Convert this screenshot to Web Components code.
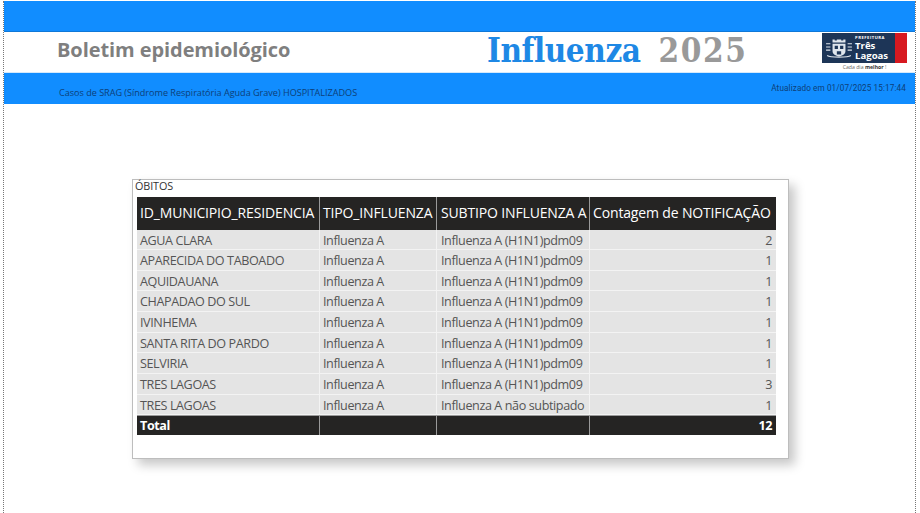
<!DOCTYPE html>
<html lang="pt-BR">
<head>
<meta charset="utf-8">
<title>Boletim epidemiológico Influenza 2025</title>
<style>
    html, body{ margin: 0; padding: 0; background: #fff; }
    body{ width: 920px; height: 513px; overflow: hidden; font-family: "Open Sans", sans-serif; }
</style>
</head>
<body>
<report-page>
    <report-header></report-header>
    <table-card title-text="ÓBITOS"></table-card>
</report-page>

<script>
class ReportPage extends HTMLElement{
    connectedCallback(){
        this.attachShadow({mode: 'open'}).innerHTML = `
            <style>
                :host{
                    display: block;
                    width: 920px;
                    height: 513px;
                    box-sizing: border-box;
                    padding: 1px 3px 0 3px;
                }
                .frame{
                    height: 100%;
                    border-left: 1px dotted #777;
                    border-right: 1px dotted #777;
                    box-sizing: border-box;
                    width: 913px;
                }
            </style>
            <div class="frame"><slot></slot></div>
        `;
    }
}

class ReportHeader extends HTMLElement{
    connectedCallback(){
        this.attachShadow({mode: 'open'}).innerHTML = `
            <style>
                :host{ display: block; }
                .top{ height: 30px; background: #118dff; border-bottom: 1px solid #0f78d8; }
                .middle{
                    height: 40px;
                    display: flex;
                    align-items: center;
                    padding-left: 53px;
                    box-sizing: border-box;
                }
                .boletim{
                    font: 700 20px "Open Sans", sans-serif;
                    letter-spacing: -0.08px;
                    color: #7f7f7f;
                    width: 430px;
                    position: relative;
                    top: -3px;
                }
                .influenza{
                    font: 700 33px "DejaVu Serif", serif;
                    font-stretch: condensed;
                    letter-spacing: -0.45px;
                    color: #1e88e5;
                    width: 335px;
                    white-space: nowrap;
                    position: relative;
                    top: -2px;
                }
                .influenza span{ color: #999; letter-spacing: 1.6px; margin-left: 8px; }
                .bottom{
                    height: 32px;
                    background: #118dff;
                    border-top: 1px solid #d5e9fb;
                    box-sizing: border-box;
                    display: flex;
                    justify-content: space-between;
                    padding: 0 9px 0 55px;
                    font-size: 9px;
                    color: #0d3f78;
                }
                .casos{ font: 9.1px "Open Sans", sans-serif; letter-spacing: -0.02px; padding-top: 13px; }
                .updated{ font: 8.2px Roboto, sans-serif; letter-spacing: 0.1px; padding-top: 10px; }
            </style>
            <div class="top"></div>
            <div class="middle">
                <div class="boletim">Boletim epidemiológico</div>
                <div class="influenza">Influenza <span>2025</span></div>
                <city-logo></city-logo>
            </div>
            <div class="bottom">
                <div class="casos">Casos de SRAG (Síndrome Respiratória Aguda Grave) HOSPITALIZADOS</div>
                <div class="updated">Atualizado em 01/07/2025 15:17:44</div>
            </div>
        `;
    }
}

class CityLogo extends HTMLElement{
    connectedCallback(){
        this.attachShadow({mode: 'open'}).innerHTML = `
            <style>
                :host{ display: block; width: 85px; align-self: flex-start; padding-top: 1px; }
                .badge{ display: flex; height: 30px; background: #1d3557; }
                .crest{ width: 33px; flex: none; display: flex; align-items: center; justify-content: center; }
                .name{
                    flex: 1;
                    color: #fff;
                    font: 700 9.6px/9.6px "Open Sans", sans-serif;
                    padding-top: 2px;
                    white-space: nowrap;
                }
                .name small{ display: block; font-size: 4.2px; line-height: 6px; letter-spacing: 0.5px; }
                .red{ width: 12px; background: #d71920; flex: none; }
                .tag{ font: 5.2px/7px "Open Sans", sans-serif; color: #666; text-align: center; padding-top: 1px; }
                .tag b{ color: #333; }
            </style>
            <div class="badge">
                <div class="crest">
                    <svg width="28" height="22" viewBox="0 0 26 20">
                        <g fill="none" stroke="#dfe5ec" stroke-width="1">
                            <path d="M1 6h4M1 9h4M1 12h4M21 6h4M21 9h4M21 12h4"/>
                            <path d="M2 17c3 2 19 2 22 0"/>
                        </g>
                        <path d="M7 5V2h2v1h2V2h4v1h2V2h2v3z" fill="#dfe5ec"/>
                        <path d="M7 6h12v7c0 3-3 4-6 5-3-1-6-2-6-5z" fill="#dfe5ec"/>
                        <path d="M9 8h3v3H9zM14 8h3v3h-3zM11 13h4v3h-4z" fill="#1d3557"/>
                    </svg>
                </div>
                <div class="name"><small>PREFEITURA</small>Três<br>Lagoas</div>
                <div class="red"></div>
            </div>
            <div class="tag">Cada dia <b>melhor</b> !</div>
        `;
    }
}

const rows = [
    ["AGUA CLARA", "Influenza A", "Influenza A (H1N1)pdm09", "2"],
    ["APARECIDA DO TABOADO", "Influenza A", "Influenza A (H1N1)pdm09", "1"],
    ["AQUIDAUANA", "Influenza A", "Influenza A (H1N1)pdm09", "1"],
    ["CHAPADAO DO SUL", "Influenza A", "Influenza A (H1N1)pdm09", "1"],
    ["IVINHEMA", "Influenza A", "Influenza A (H1N1)pdm09", "1"],
    ["SANTA RITA DO PARDO", "Influenza A", "Influenza A (H1N1)pdm09", "1"],
    ["SELVIRIA", "Influenza A", "Influenza A (H1N1)pdm09", "1"],
    ["TRES LAGOAS", "Influenza A", "Influenza A (H1N1)pdm09", "3"],
    ["TRES LAGOAS", "Influenza A", "Influenza A não subtipado", "1"]
];

class TableCard extends HTMLElement{
    connectedCallback(){
        const body = rows.map(r => `
            <div class="row">
                <div class="cell">${r[0]}</div>
                <div class="cell">${r[1]}</div>
                <div class="cell">${r[2]}</div>
                <div class="cell num">${r[3]}</div>
            </div>`).join("");
        this.attachShadow({mode: 'open'}).innerHTML = `
            <style>
                :host{
                    display: block;
                    box-sizing: border-box;
                    width: 657px;
                    height: 280px;
                    margin: 75px 0 0 128px;
                    padding: 0 12px 0 4px;
                    background: #fff;
                    border: 1px solid #bdbdbd;
                    box-shadow: 6px 6px 10px rgba(0,0,0,.22);
                    font: 12.6px "Open Sans", sans-serif;
                    letter-spacing: -0.4px;
                }
                .title{ height: 16.5px; font-size: 10.8px; line-height: 12px; color: #333; margin-left: -2px; letter-spacing: -0.1px; }
                .row{
                    display: grid;
                    grid-template-columns: 183px 117px 153px 1fr;
                    height: 20.65px;
                    background: #e4e4e4;
                    border-bottom: 1px solid #f3f3f3;
                    box-sizing: border-box;
                    color: #555;
                    line-height: 22px;
                }
                .cell{
                    padding: 0 3px;
                    border-right: 1px solid #f3f3f3;
                    white-space: nowrap;
                    overflow: hidden;
                }
                .cell:nth-child(3){ padding-left: 4px; }
                .cell:last-child{ border-right: 0; padding-right: 4px; }
                .num{ text-align: right; }
                .row.head{
                    height: 33px;
                    background: #252423;
                    color: #fff;
                    border-bottom: 0;
                    font-size: 14px;
                    letter-spacing: -0.15px;
                    line-height: 31px;
                }
                .row.head .cell{ border-right-color: #9a9a9a; overflow: visible; }
                .row.head .cell:last-child{ border-right: 0; }
                .row.total{
                    height: 19.8px;
                    background: #252423;
                    color: #fff;
                    font-weight: 700;
                    border-bottom: 0;
                    border-top: 1px solid #9a9a9a;
                    line-height: 20px;
                }
                .row.total .cell{ border-right-color: #9a9a9a; }
                .row.total .cell:last-child{ border-right: 0; }
            </style>
            <div class="title">${this.getAttribute("title-text")}</div>
            <div class="row head">
                <div class="cell">ID_MUNICIPIO_RESIDENCIA</div>
                <div class="cell">TIPO_INFLUENZA</div>
                <div class="cell">SUBTIPO INFLUENZA A</div>
                <div class="cell">Contagem de NOTIFICAÇÃO</div>
            </div>
            ${body}
            <div class="row total">
                <div class="cell">Total</div>
                <div class="cell"></div>
                <div class="cell"></div>
                <div class="cell num">12</div>
            </div>
        `;
    }
}

customElements.define("report-page", ReportPage);
customElements.define("report-header", ReportHeader);
customElements.define("city-logo", CityLogo);
customElements.define("table-card", TableCard);
</script>
</body>
</html>
